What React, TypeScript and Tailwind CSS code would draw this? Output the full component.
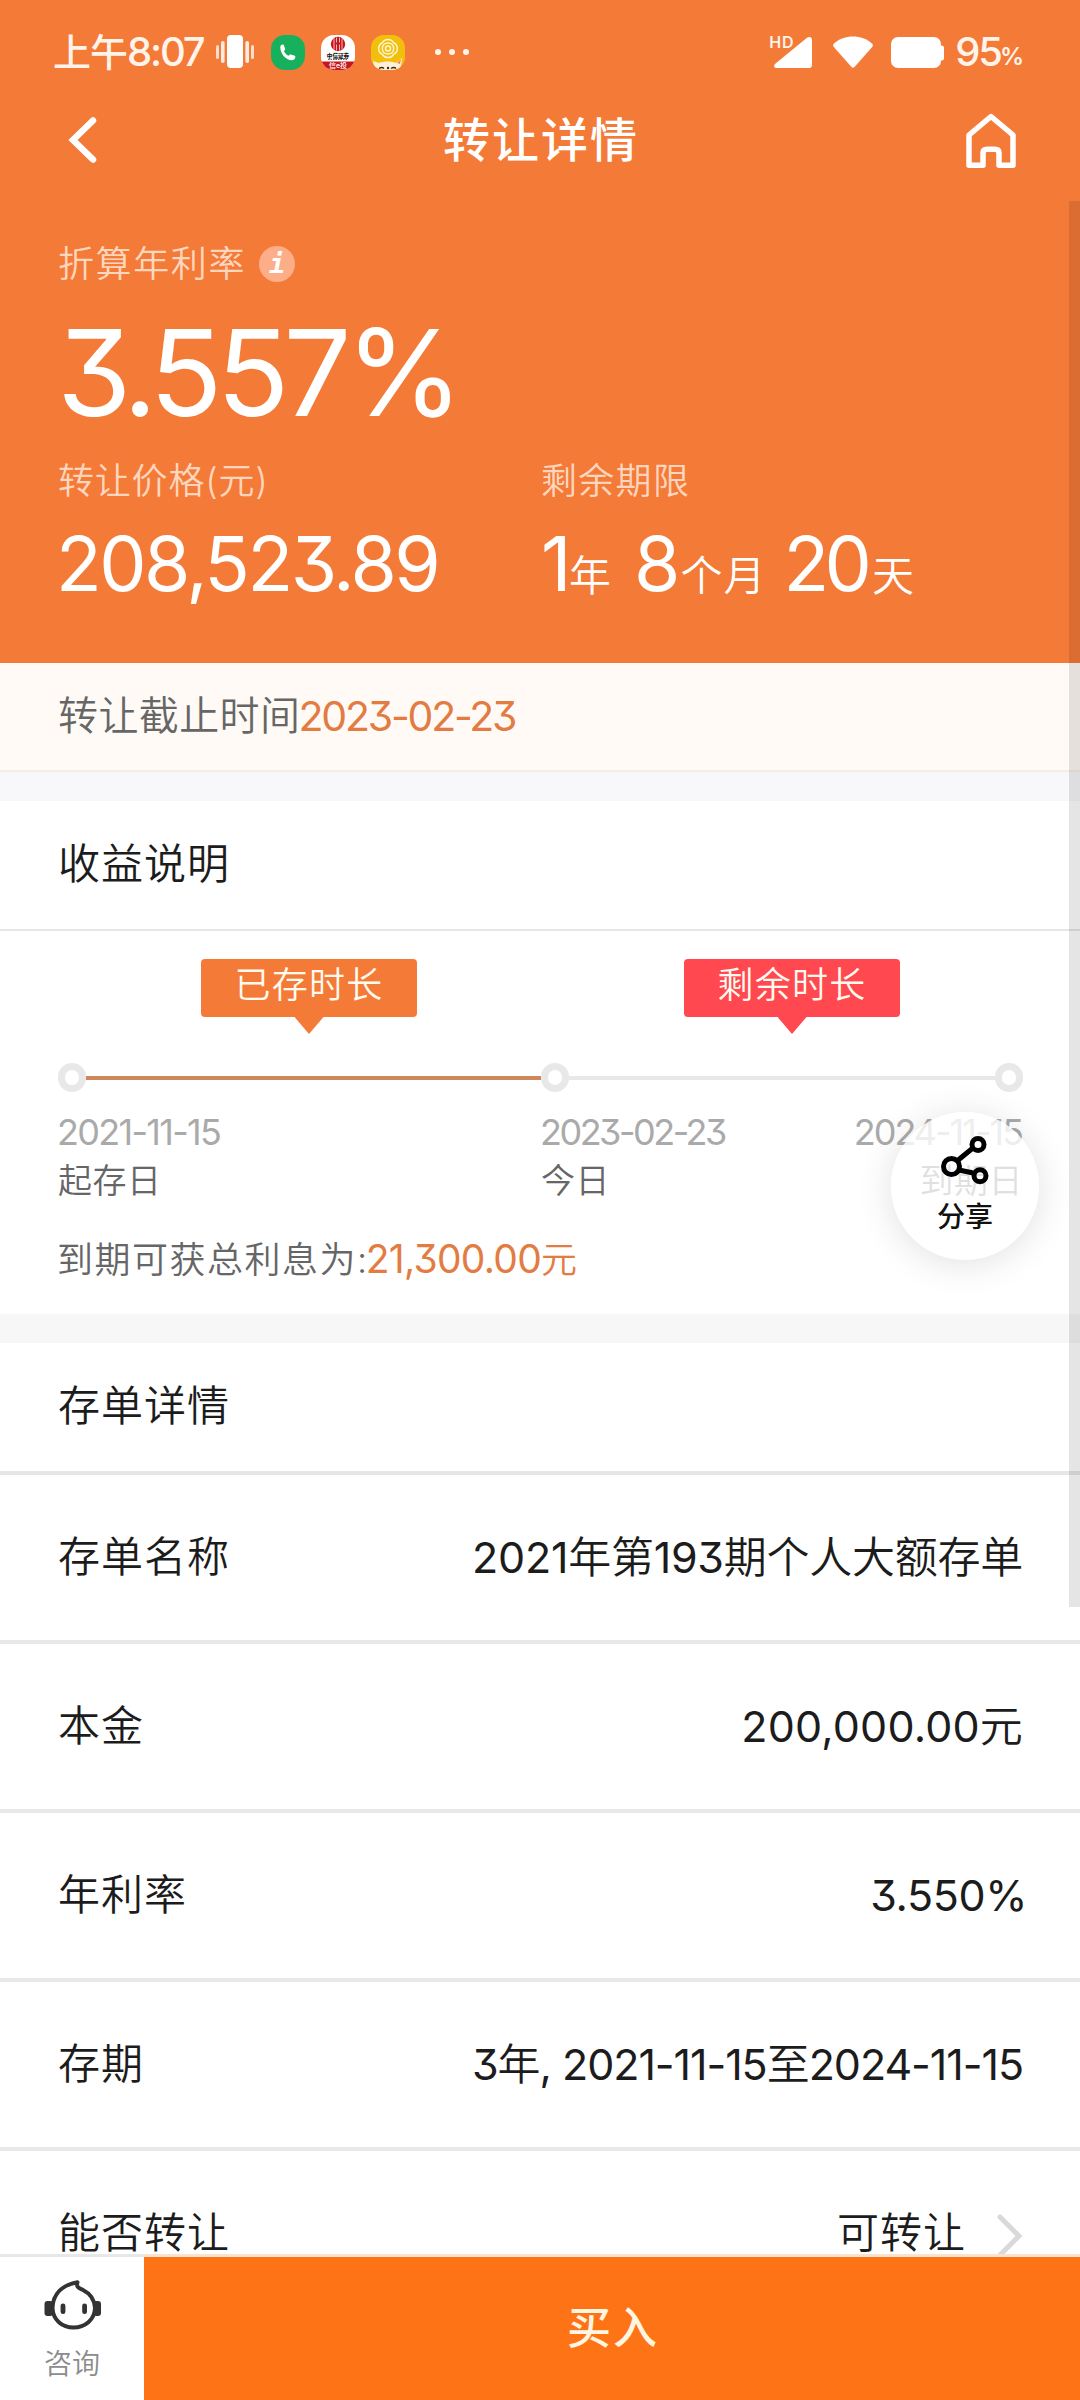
import type { ReactNode } from "react";

// Sets the figures inside a mixed string slightly heavier than the Chinese characters around them.
function Mixed({ text }: { text: string }) {
  return (
    <>
      {text.split(/([\d.,%:()-]+)/).map((part, i) =>
        i % 2 ? (
          <span key={i} className="font-normal">
            {part}
          </span>
        ) : (
          part
        ),
      )}
    </>
  );
}

function StatusBar() {
  return (
    <div className="flex h-[104px] items-center pr-[58px] pl-[53px] font-medium text-[#fff3ea]">
      <span className="text-[38px] leading-[48px] tracking-[-1px]">上午</span>
      <span className="text-[40px] leading-[48px] tracking-[-2.200px]">8:07</span>
      <svg className="ml-[13px]" width="38" height="34" viewBox="0 0 38 34" fill="#fff">
        <rect x="11" y="0" width="16" height="33" rx="4" />
        <rect x="5" y="6" width="3.6" height="22" rx="1.8" opacity="0.85" />
        <rect x="29.4" y="6" width="3.6" height="22" rx="1.8" opacity="0.85" />
        <rect x="0" y="10" width="3" height="14" rx="1.5" opacity="0.75" />
        <rect x="35" y="10" width="3" height="14" rx="1.5" opacity="0.75" />
      </svg>
      <svg className="ml-[17px]" width="34" height="35" viewBox="0 0 34 35">
        <rect width="34" height="35" rx="14" fill="#17b15e" />
        <path
          d="M9.3 12.2c0-2 1.6-2.6 2.4-2.6.8 0 1.1.5 1.4 1.3l1 2.8c.3.9-.1 1.300-1.200 2.300.9 2.100 2.500 3.700 4.600 4.800 1-1.200 1.500-1.500 2.400-1.200l3.200.9c.9.3 1.300.8 1.200 1.700-.2 2-1.700 3-3.600 3-5.800-.2-11.400-6.200-11.400-13z"
          fill="#fff"
        />
      </svg>
      <svg className="ml-[16px]" width="34" height="35" viewBox="0 0 34 35">
        <clipPath id="brokerClip">
          <rect width="34" height="35" rx="13" />
        </clipPath>
        <g clipPath="url(#brokerClip)">
          <rect width="34" height="35" fill="#fff" />
          <rect y="26.500" width="34" height="9" fill="#c8161d" />
          <circle cx="17" cy="9" r="7.200" fill="#c8161d" />
          <path d="M13 3.500v11M15.500 2.500v5M15.500 9.500v6M18.500 2.500v5M18.500 9.500v6M21 3.500v11" stroke="#fff" strokeWidth="0.700" />
          <text x="17" y="22.500" fontSize="5.600" fontWeight="900" textAnchor="middle" fill="#222">中信证券</text>
          <path d="M7 24.300h20" stroke="#444" strokeWidth="1" strokeDasharray="1.500 1" />
          <text x="17" y="33" fontSize="7" fontWeight="500" textAnchor="middle" fill="#fff">信e投</text>
        </g>
      </svg>
      <svg className="ml-[16px]" width="34" height="35" viewBox="0 0 34 35">
        <clipPath id="yellowClip">
          <rect width="34" height="35" rx="13" />
        </clipPath>
        <g clipPath="url(#yellowClip)">
          <rect width="34" height="35" fill="#f3bf0d" />
          <g fill="none" stroke="#fff6d0" strokeWidth="1.500">
            <path d="M17 4.500c3 0 4.500 1.200 5.500 3.200 2.500 1 3.800 3 3.800 5.800s-1.300 4.800-3.800 5.800c-1 2-2.500 3.200-5.500 3.200s-4.500-1.200-5.500-3.200c-2.500-1-3.800-3-3.800-5.800s1.300-4.800 3.800-5.800c1-2 2.500-3.200 5.500-3.200z" />
            <path d="M17 8c3.500 0 5.700 2.300 5.700 5.500S20.500 19 17 19s-5.700-2.300-5.700-5.500S13.500 8 17 8z" />
            <circle cx="17" cy="13.500" r="2.500" />
          </g>
          <path d="M2 26l6 2c5-2 12-2 17 0l6-5-1 8-4 5H8l-5-5z" fill="#fdf0d8" />
          <path d="M26 28l4-4-1 5z" fill="#e8895c" />
          <path d="M8 33.500q3-2 5 0M20 33.500q3-2 5 0" stroke="#3a2a22" strokeWidth="1.300" fill="none" />
          <circle cx="17" cy="33" r="1.200" fill="#3a2a22" />
        </g>
      </svg>
      <div className="ml-[30px] flex gap-[8px]">
        <i className="size-[6px] rounded-full bg-[#fff3ea]" />
        <i className="size-[6px] rounded-full bg-[#fff3ea]" />
        <i className="size-[6px] rounded-full bg-[#fff3ea]" />
      </div>
      <div className="ml-auto flex items-center">
        <span className="relative z-10 -mt-[20px] -mr-[20px] text-[16px] leading-[20px] font-semibold tracking-[0.8px]">HD</span>
        <svg width="38" height="31" viewBox="0 0 38 31" fill="#fff">
          <path d="M33 .8C35.500-.8 38 .2 38 3v25c0 2-1 3-3 3H3c-3 0-4-2.500-1.500-4.500z" />
          <path d="M-1-1h19.500v13H-1z" fill="#f47a38" />
        </svg>
        <svg className="ml-[21px]" width="40" height="32" viewBox="0 0 40 32" fill="#fff">
          <path d="M1 7.500C6 3 13 .5 20 .5S34 3 39 7.500c1.100 1 1.100 2.300.2 3.400L21.500 31c-.9 1-2.100 1-3 0L.8 10.900C-.1 9.800-.1 8.500 1 7.500z" />
        </svg>
        <svg className="ml-[18px]" width="53" height="31" viewBox="0 0 53 31" fill="#fff">
          <rect width="50" height="31" rx="7" />
          <rect x="46" y="8.500" width="7" height="15" rx="2.500" />
        </svg>
        <span className="-mr-[1px] ml-[11px] text-[40px] leading-[48px] tracking-[-2.200px]">95</span>
        <span className="mt-[10px] text-[24px] leading-[30px] font-semibold tracking-[-2px]">%</span>
      </div>
    </div>
  );
}

function NavBar() {
  return (
    <div className="flex h-[72px] items-center justify-between pr-[64px] pl-[68px]">
      <svg width="50" height="46" viewBox="0 0 50 46" fill="none" stroke="#fff" strokeWidth="6.500" strokeLinecap="round">
        <path d="M25 3.500 5 23l20 19.500" />
      </svg>
      <h1 className="-ml-[2px] text-[47px] leading-[60px] font-medium tracking-[2px]">转让详情</h1>
      <svg width="50" height="56" viewBox="0 0 50 56" fill="none" stroke="#fff" strokeWidth="5.500" strokeLinejoin="round">
        <path d="M25 4.500 3 23v30.200h14V41q0-3.700 4-3.700h8q4 0 4 3.700v12.200h14V23z" />
      </svg>
    </div>
  );
}

function Summary() {
  return (
    <div className="pl-[58px]">
      <div className="mt-[64px] flex h-[48px] items-center">
        <span className="text-[36px] leading-[48px] tracking-[1.600px] text-[#ffd6bd]">折算年利率</span>
        <span className="ml-[13px] flex size-[36px] items-center justify-center rounded-full bg-[#fdae88] font-['DejaVu_Sans_Mono'] text-[27px] leading-[36px] font-bold italic">
          i
        </span>
      </div>
      <div className="mt-[25px] -ml-[1px] text-[120px] leading-[120px] font-normal tracking-[-6px]">3.557%</div>
      <div className="mt-[24px] grid grid-cols-[483px_1fr]">
        <div>
          <div className="text-[36px] leading-[48px] tracking-[0.800px] text-[#ffd6bd]">转让价格(元)</div>
          <div className="mt-[19px] -ml-[2px] text-[75px] leading-[80px] font-normal tracking-[-2.500px]">208,523.89</div>
        </div>
        <div>
          <div className="text-[36px] leading-[48px] tracking-[1.300px] text-[#ffd6bd]">剩余期限</div>
          <div className="mt-[19px] flex items-baseline text-[42px] leading-[80px]">
            <span className="text-[75px] font-normal tracking-[-2.500px]">1</span>
            <span className="-mt-[2px] mb-[2px]">年</span>
            <span className="ml-[23px] text-[75px] font-normal">8</span>
            <span className="tracking-[1px]">个月</span>
            <span className="ml-[17px] text-[75px] font-normal tracking-[-4.700px]">20</span>
            <span className="ml-[5px]">天</span>
          </div>
        </div>
      </div>
    </div>
  );
}

function Badge({ label, className, tail }: { label: string; className: string; tail: string }) {
  return (
    <div className="w-[216px]">
      <div className={`flex h-[58px] items-center justify-center rounded-[4px] pb-[6px] text-[36px] leading-[48px] tracking-[1.300px] text-[#fffaf0] ${className}`}>
        {label}
      </div>
      <div className={`mx-auto h-[17px] w-[29px] [clip-path:polygon(0_0,100%_0,50%_100%)] ${tail}`} />
    </div>
  );
}

function Dot() {
  return <i className="h-[29px] w-[28px] shrink-0 rounded-full border-[7px] border-[#e8e8e8] bg-white" />;
}

function Timeline() {
  return (
    <div className="h-[383px] pt-[28px] text-[#666]">
      <div className="flex gap-[267px] pl-[201px]">
        <Badge label="已存时长" className="bg-[#f47a38]" tail="bg-[#f47a38]" />
        <Badge label="剩余时长" className="bg-[#ff484f]" tail="bg-[#ff484f]" />
      </div>
      <div className="mt-[29px] flex items-center pr-[57px] pl-[58px]">
        <Dot />
        <div className="h-[4px] w-[455px] bg-[#d0875a]" />
        <Dot />
        <div className="h-[4px] flex-1 bg-[#e8e8e8]" />
        <Dot />
      </div>
      <div className="mt-[16px] flex pr-[58px] pl-[58px] text-[34px] leading-[48px] tracking-[0.500px]">
        <div className="w-[483px]">
          <div className="-ml-[1px] text-[36px] font-normal tracking-[-1.700px] text-[#aaa]">2021-11-15</div>
          <div className="mt-[1px]">起存日</div>
        </div>
        <div>
          <div className="-ml-[1px] text-[36px] font-normal tracking-[-2.500px] text-[#aaa]">2023-02-23</div>
          <div className="mt-[1px]">今日</div>
        </div>
        <div className="ml-auto text-right">
          <div className="text-[36px] font-normal tracking-[-2px] text-[#aaa]">2024-11-15</div>
          <div className="mt-[1px] -mr-[1px]">到期日</div>
        </div>
      </div>
      <div className="mt-[30px] pl-[57px] text-[36px] leading-[48px]">
        <span className="tracking-[1.500px]">到期可获总利息为:</span>
        <span className="-ml-[3px] text-[39px] font-normal tracking-[-0.700px] text-[#e27c42]">21,300.00</span>
        <span className="text-[#e27c42]">元</span>
      </div>
    </div>
  );
}

function Row({ label, children }: { label: string; children: ReactNode }) {
  return (
    <div className="flex h-[169px] shrink-0 items-center justify-between border-b-[4px] border-[#e8e8e8] pr-[57px] pb-[2px] pl-[58px] text-[42px] leading-[60px] text-[#1c1c1c]">
      <span className="tracking-[1px]">{label}</span>
      {children}
    </div>
  );
}

function ShareButton() {
  return (
    <button className="absolute top-[1112px] left-[891px] size-[148px] rounded-full bg-white/80 shadow-[0_4px_36px_rgba(0,0,0,0.12)]">
      <svg className="mx-auto -mt-[1px]" width="56" height="56" viewBox="0 0 56 56" fill="none" stroke="#000" strokeWidth="5">
        <path d="M20 25 36.500 11.500M22 34l14 3" />
        <circle cx="14.500" cy="30.500" r="8" />
        <circle cx="41" cy="8.600" r="6" />
        <circle cx="43" cy="39.800" r="6" />
      </svg>
      <div className="mt-[7px] text-[28px] leading-[36px] font-medium text-[#111]">分享</div>
    </button>
  );
}

function BottomBar() {
  return (
    <div className="flex h-[146px] shrink-0">
      <div className="flex w-[144px] flex-col items-center border-t-[3px] border-[#e8e8e8] bg-white">
        <svg className="mt-[23px] ml-[1px]" width="57" height="50" viewBox="0 0 57 50" fill="none" stroke="#333" strokeWidth="4">
          <path d="M8.500 28C9 14 18 5 33.500 2.200 31.500 7.500 36 8.500 39 10c7 3.500 11.500 9 12 18C50.500 40 41 47.500 29.500 47.500S9 40 8.500 28z" strokeLinejoin="round" />
          <g fill="#333" stroke="none">
            <rect x="0.500" y="21" width="8.500" height="15" rx="3" />
            <rect x="49.500" y="21" width="7.500" height="15" rx="3" />
            <rect x="16.600" y="23.500" width="4.800" height="10.500" rx="2.300" />
            <rect x="38.200" y="23.500" width="4.800" height="10.500" rx="2.300" />
          </g>
        </svg>
        <span className="mt-[16px] text-[28px] leading-[36px] text-[#8c8c8c]">咨询</span>
      </div>
      <button className="flex-1 border-t-[3px] border-[#f8e4cc] bg-[#fe7316] pb-[2px] pl-[2px] text-[44px] leading-[60px] font-medium tracking-[2px] text-[#fff6e2]">
        买入
      </button>
    </div>
  );
}

export default function App() {
  return (
    <div className="relative flex h-[2400px] w-[1080px] flex-col overflow-hidden bg-white font-['Inter','Noto_Sans_CJK_SC',sans-serif] font-[350] [font-feature-settings:'cv09']">
      <header className="h-[663px] shrink-0 bg-[#f47a38] text-white">
        <StatusBar />
        <NavBar />
        <Summary />
      </header>
      <main className="flex min-h-0 flex-1 flex-col overflow-hidden">
        <div className="flex h-[109px] shrink-0 items-center border-b-2 border-[#f8ede4] bg-[#fffaf5] pb-[1px] pl-[58px] leading-[56px]">
          <span className="text-[40px] tracking-[0.400px] text-[#666]">转让截止时间</span>
          <span className="-ml-[2px] text-[41px] font-normal tracking-[-2.200px] text-[#e27c42]">2023-02-23</span>
        </div>
        <div className="h-[29px] shrink-0 bg-[#f8f7f9]" />
        <section className="shrink-0">
          <h2 className="flex h-[130px] items-center border-b-2 border-[#e6e6e6] pb-[2px] pl-[58px] text-[42px] leading-[56px] tracking-[1px] text-[#1c1c1c]">
            收益说明
          </h2>
          <Timeline />
        </section>
        <div className="h-[29px] shrink-0 bg-[#f7f7f7]" />
        <h2 className="flex h-[132px] shrink-0 items-center border-b-[4px] border-[#e6e6e6] pb-[2px] pl-[58px] text-[42px] leading-[56px] tracking-[1px] text-[#1c1c1c]">
          存单详情
        </h2>
        <Row label="存单名称">
          <span className="text-[43px] tracking-[-0.250px]">
            <Mixed text="2021年第193期个人大额存单" />
          </span>
        </Row>
        <Row label="本金">
          <span className="text-[43px] tracking-[0.200px]">
            <Mixed text="200,000.00元" />
          </span>
        </Row>
        <Row label="年利率">
          <span className="-mr-[4px] text-[43px] tracking-[-0.400px]">
            <Mixed text="3.550%" />
          </span>
        </Row>
        <Row label="存期">
          <span className="text-[43px] tracking-[-1.050px]">
            <Mixed text="3年, 2021-11-15至2024-11-15" />
          </span>
        </Row>
        <Row label="能否转让">
          <span className="flex items-center tracking-[1px]">
            可转让
            <svg className="mt-[6px] ml-[30px]" width="27" height="44" viewBox="0 0 27 44" fill="none" stroke="#d9d9d9" strokeWidth="5" strokeLinecap="round">
              <path d="M4 3l19 19L4 41" />
            </svg>
          </span>
        </Row>
      </main>
      <BottomBar />
      <ShareButton />
      <div className="absolute top-[201px] right-0 h-[1406px] w-[11px] bg-black/10" />
    </div>
  );
}
